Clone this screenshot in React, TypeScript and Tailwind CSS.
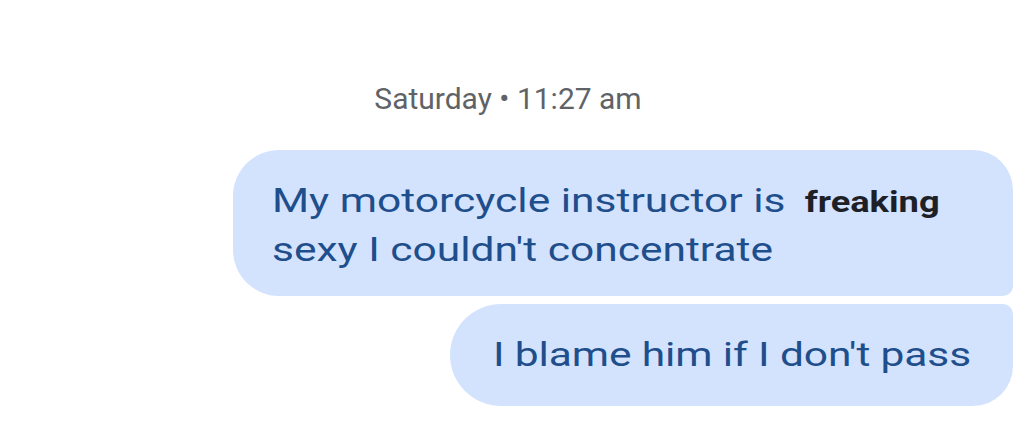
const roboto = { fontFamily: 'Roboto, "Noto Sans", sans-serif' }

function Bubble({ children, className }: { children: React.ReactNode; className: string }) {
  return (
    <div className={`bg-[#d3e3fd] text-[#1f4e8c] text-[34px] leading-[47px] ${className}`}>
      <div className="w-fit origin-left scale-x-125 whitespace-nowrap">{children}</div>
    </div>
  )
}

export default function App() {
  return (
    <div className="flex h-[447px] w-[1016px] flex-col overflow-hidden bg-white" style={roboto}>
      <div className="pt-[80px] text-center text-[30px] leading-[38px] text-[#5f6368]">
        Saturday • 11:27 am
      </div>
      <div className="mt-[32px] flex flex-col items-end gap-[8px] pr-[3px]">
        <Bubble className="w-[780px] rounded-l-[46px] rounded-tr-[40px] rounded-br-[10px] pl-[39px] pr-[30px] pt-[27px] pb-[23px]">
          My motorcycle instructor is{' '}
          <span className="ml-[7px] text-[29px] font-bold text-[#1d2127]">freaking</span>
          <br />
          sexy I couldn't concentrate
        </Bubble>
        <Bubble className="w-[563px] rounded-l-[51px] rounded-tr-[10px] rounded-br-[40px] pl-[43px] pt-[27px] pb-[28px] tracking-[-0.1px]">
          I blame him if I don't pass
        </Bubble>
      </div>
    </div>
  )
}
